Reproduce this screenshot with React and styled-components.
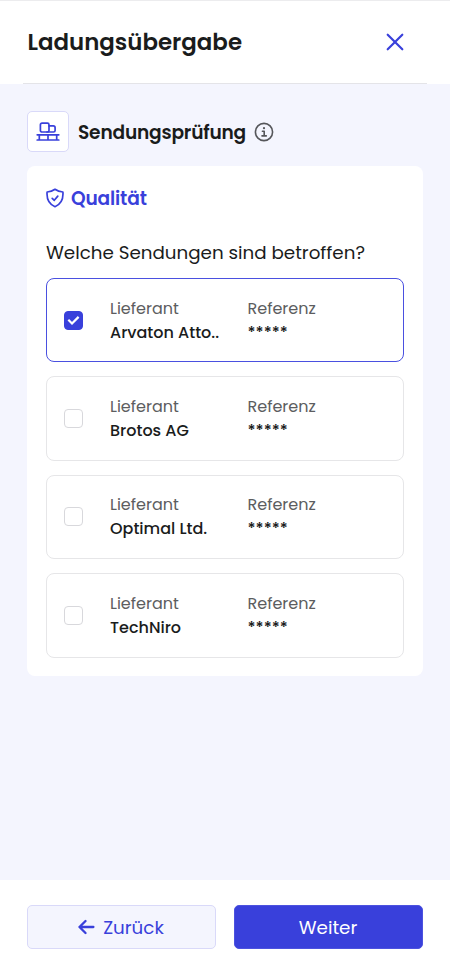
import styled, { createGlobalStyle } from 'styled-components';

const GlobalStyle = createGlobalStyle`
    * {
        box-sizing: border-box;
    }

    body {
        margin: 0;
        background-color: white;
        font-family: Poppins, Inter, "Liberation Sans", sans-serif;
        color: #1a1c1c;
    }
`

const Page = styled.div`
    height: 976px;
    display: flex;
    flex-direction: column;
    border-top: 1px solid #ececee;
    background-color: #f4f5fe;
`

const Header = styled.header`
    height: 83px;
    flex-shrink: 0;
    padding: 0 23px;
    background-color: white;
`

const HeaderInner = styled.div`
    height: 83px;
    padding: 0 22px 0 4.5px;
    display: flex;
    align-items: center;
    justify-content: space-between;
    border-bottom: 1px solid #e4e4e8;
`

const Title = styled.h1`
    margin: 0;
    font-size: 22.9px;
    line-height: 30px;
    font-weight: 600;
`

const IconButton = styled.button`
    display: flex;
    padding: 0;
    border: none;
    background: none;
    color: #3940db;
`

const Content = styled.main`
    flex: 1;
    padding: 27px 27px 0;
`

const SectionHead = styled.div`
    height: 41px;
    display: flex;
    align-items: center;
    margin-bottom: 14px;
`

const SectionIcon = styled.div`
    width: 42px;
    height: 41px;
    margin-right: 9px;
    display: flex;
    align-items: center;
    justify-content: center;
    border: 1px solid #d9d9f9;
    border-radius: 5px;
    background-color: white;
    color: #3940db;
`

const SectionTitle = styled.h2`
    margin: 2px 7.5px 0 0;
    font-size: 18.6px;
    line-height: 28px;
    font-weight: 600;
    letter-spacing: -0.2px;
`

const Card = styled.section`
    height: 510px;
    padding: 20px 19px 0;
    border-radius: 8px;
    background-color: white;
`

const CardTitle = styled.h3`
    margin: 0;
    height: 24px;
    display: flex;
    align-items: center;
    gap: 7px;
    color: #3940db;
    font-size: 18.6px;
    font-weight: 600;
    letter-spacing: -0.15px;
`

const Question = styled.p`
    margin: 29px 0 12px;
    height: 27px;
    line-height: 27px;
    font-size: 18.3px;
    white-space: nowrap;
`

const ShipmentList = styled.div`
    display: flex;
    flex-direction: column;
    gap: 14px;
`

const Shipment = styled.div`
    height: 84.4px;
    padding: 0 17px;
    display: grid;
    grid-template-columns: 46px 137.5px 1fr;
    align-items: center;
    border: 1px solid ${props => props.$checked ? '#4a50e0' : '#e6e6e8'};
    border-radius: 8px;
`

const Checkbox = styled.div`
    width: 19px;
    height: 19px;
    display: flex;
    align-items: center;
    justify-content: center;
    border: 1px solid ${props => props.$checked ? '#3940db' : '#d8d8dc'};
    border-radius: 4px;
    background-color: ${props => props.$checked ? '#3940db' : 'white'};
    color: white;
`

const Field = styled.div`
    display: flex;
    flex-direction: column;
    padding-top: 1px;
    line-height: 24px;
    white-space: nowrap;
`

const Label = styled.span`
    font-size: 16px;
    color: #5c5d60;
`

const Value = styled.span`
    font-size: 16px;
    font-weight: 500;
`

const Footer = styled.footer`
    height: 96px;
    padding: 25px 27px 0;
    display: grid;
    grid-template-columns: 1fr 1fr;
    gap: 18px;
    background-color: white;
`

const Button = styled.button`
    height: 44px;
    padding: 0 1px 0 0;
    display: flex;
    align-items: center;
    justify-content: center;
    gap: 8px;
    border: 1px solid ${props => props.$primary ? '#4c52df' : '#d9d9f9'};
    border-radius: 5px;
    background-color: ${props => props.$primary ? '#3940db' : '#f4f5fe'};
    color: ${props => props.$primary ? 'white' : '#3940db'};
    font-family: inherit;
    font-size: 18.3px;
`

const CloseIcon = () => (
    <svg width="20" height="20" viewBox="0 0 20 20" fill="none" stroke="currentColor" strokeWidth="2.2" strokeLinecap="round">
        <path d="M2.7 2.7l14.6 14.6M17.3 2.7L2.7 17.3" />
    </svg>
)

const PalletIcon = () => (
    <svg width="24" height="20" viewBox="0 0 24 20" fill="none" stroke="currentColor" strokeWidth="1.7" strokeLinecap="round" strokeLinejoin="round">
        <rect x="4.4" y="1.2" width="8.6" height="8.8" rx="1.6" />
        <path d="M13 3.9h4.3a1.8 1.8 0 0 1 1.8 1.8v2.7a1.6 1.6 0 0 1-1.6 1.6H11" />
        <path d="M1.2 12.8h21.6M1.2 18h21.6M3.3 12.8V18M12 12.8V18M20.7 12.8V18" />
    </svg>
)

const InfoIcon = () => (
    <svg width="20" height="20" viewBox="0 0 20 20" fill="none" stroke="#55565a" strokeWidth="1.6" strokeLinecap="round" strokeLinejoin="round">
        <circle cx="10" cy="10" r="8.6" />
        <path d="M8.4 9.2h1.8v4.6M8 13.9h4.3" />
        <circle cx="10" cy="6.2" r="1.1" fill="#55565a" stroke="none" />
    </svg>
)

const ShieldIcon = () => (
    <svg width="18" height="20" viewBox="0 0 18 20" fill="none" stroke="currentColor" strokeWidth="1.7" strokeLinecap="round" strokeLinejoin="round">
        <path d="M9 1.3c2.3 1.7 4.7 2.5 7.9 2.7.5 6-.7 11.7-7.9 14.7C1.8 15.7.6 10 1.1 4 4.3 3.8 6.7 3 9 1.3z" />
        <path d="M6.2 10.3l2.1 2 3.5-4.2" />
    </svg>
)

const CheckIcon = () => (
    <svg width="13" height="11" viewBox="0 0 13 11" fill="none" stroke="currentColor" strokeWidth="2.2">
        <path d="M1.3 4.8l3.7 3.7 6.6-6.6" />
    </svg>
)

const ArrowIcon = () => (
    <svg width="17" height="16" viewBox="0 0 17 16" fill="none" stroke="currentColor" strokeWidth="2.3" strokeLinecap="round" strokeLinejoin="round">
        <path d="M15.4 8H1.5M7.5 2L1.5 8l6 6" />
    </svg>
)

const App = () => {

    const shipments = [
        {id:1, supplier:"Arvaton Atto..", reference:"*****", checked:true},
        {id:2, supplier:"Brotos AG", reference:"*****", checked:false},
        {id:3, supplier:"Optimal Ltd.", reference:"*****", checked:false},
        {id:4, supplier:"TechNiro", reference:"*****", checked:false}
    ]

    return (
        <Page>
            <GlobalStyle />
            <Header>
                <HeaderInner>
                    <Title>Ladungsübergabe</Title>
                    <IconButton aria-label="Schließen"><CloseIcon /></IconButton>
                </HeaderInner>
            </Header>
            <Content>
                <SectionHead>
                    <SectionIcon><PalletIcon /></SectionIcon>
                    <SectionTitle>Sendungsprüfung</SectionTitle>
                    <InfoIcon />
                </SectionHead>
                <Card>
                    <CardTitle><ShieldIcon />Qualität</CardTitle>
                    <Question>Welche Sendungen sind betroffen?</Question>
                    <ShipmentList>
                        {shipments.map((shipment) => (
                            <Shipment key={shipment.id} $checked={shipment.checked}>
                                <Checkbox $checked={shipment.checked}>
                                    {shipment.checked && <CheckIcon />}
                                </Checkbox>
                                <Field>
                                    <Label>Lieferant</Label>
                                    <Value>{shipment.supplier}</Value>
                                </Field>
                                <Field>
                                    <Label>Referenz</Label>
                                    <Value>{shipment.reference}</Value>
                                </Field>
                            </Shipment>
                        ))}
                    </ShipmentList>
                </Card>
            </Content>
            <Footer>
                <Button><ArrowIcon />Zurück</Button>
                <Button $primary>Weiter</Button>
            </Footer>
        </Page>
    )
}

export default App
